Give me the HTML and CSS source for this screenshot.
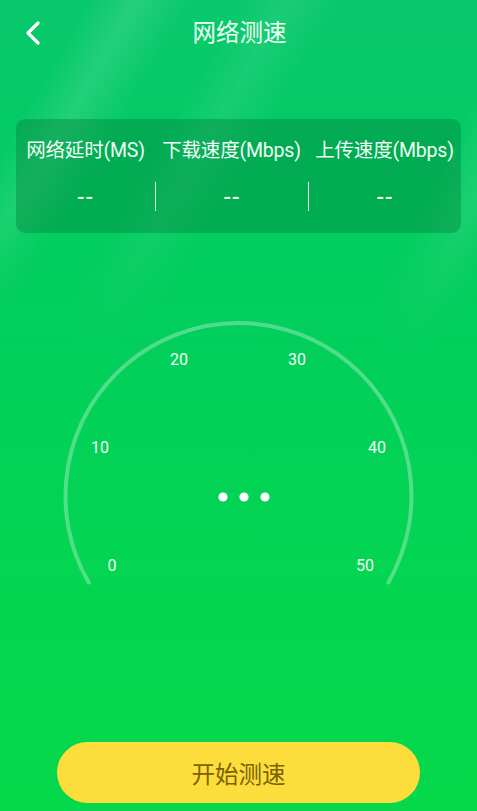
FILE: index.html
```html
<!DOCTYPE html>
<html lang="zh-CN">
<head>
<meta charset="utf-8">
<title>网络测速</title>
<link rel="stylesheet" href="styles.css">
</head>
<body>
<div class="page">
  <header class="topbar">
    <svg class="back" width="16" height="26" viewBox="0 0 16 26">
      <path d="M13 3 L3 13 L13 23" fill="none" stroke="#fff" stroke-width="3.2" stroke-linecap="round" stroke-linejoin="round"/>
    </svg>
    <h1 class="title">网络测速</h1>
  </header>

  <section class="card">
    <div class="labels">
      <span>网络延时(MS)</span>
      <span>下载速度(Mbps)</span>
      <span>上传速度(Mbps)</span>
    </div>
    <div class="values">
      <span class="val">--</span>
      <span class="val sep">--</span>
      <span class="val sep">--</span>
    </div>
  </section>

  <svg class="gauge" width="477" height="300" viewBox="0 0 477 300">
    <path d="M88.7 282.5 A173 173 0 1 1 388.3 282.5" fill="none" stroke="rgba(255,255,255,0.3)" stroke-width="4" stroke-linecap="round"/>
    <g class="ticks">
      <text x="112" y="265">0</text>
      <text x="100" y="147">10</text>
      <text x="179" y="59">20</text>
      <text x="297" y="59">30</text>
      <text x="377" y="147">40</text>
      <text x="365" y="265">50</text>
    </g>
    <circle cx="223" cy="197" r="4.6" fill="#fff"/>
    <circle cx="244" cy="197" r="4.6" fill="#fff"/>
    <circle cx="265" cy="197" r="4.6" fill="#fff"/>
  </svg>

  <div class="spacer"></div>

  <button class="start">开始测速</button>
</div>
</body>
</html>
```

FILE: styles.css
```css
html, body {
  margin: 0;
  padding: 0;
}
body {
  width: 477px;
  height: 811px;
  overflow: hidden;
  font-family: "Roboto", "Noto Sans CJK SC", sans-serif;
}
.page {
  width: 477px;
  height: 811px;
  display: flex;
  flex-direction: column;
  position: relative;
  isolation: isolate;
  background: linear-gradient(180deg, #08c86c 0%, #02cb63 22%, #02d05a 45%, #04d552 70%, #06d84b 100%);
}
.page::before {
  content: "";
  position: absolute;
  left: 0;
  top: 0;
  right: 0;
  height: 420px;
  z-index: -1;
  pointer-events: none;
  background:
    linear-gradient(120deg, rgba(255,255,255,0) 12%, rgba(255,255,255,0.12) 19%, rgba(255,255,255,0) 27%, rgba(255,255,255,0) 33%, rgba(255,255,255,0.08) 40%, rgba(255,255,255,0) 48%),
    linear-gradient(116deg, rgba(255,255,255,0) 76%, rgba(255,255,255,0.11) 84%, rgba(255,255,255,0) 92%);
  -webkit-mask-image: linear-gradient(180deg, #000 0%, #000 45%, transparent 85%);
  mask-image: linear-gradient(180deg, #000 0%, #000 45%, transparent 85%);
}
.topbar {
  height: 66px;
  position: relative;
  display: flex;
  align-items: center;
  justify-content: center;
}
.back {
  position: absolute;
  left: 25px;
  top: 20px;
}
.title {
  margin: 0 0 4px;
  font-family: "Noto Sans CJK SC", sans-serif;
  font-weight: 400;
  font-size: 23.5px;
  color: #effff4;
  line-height: 30px;
  padding-left: 2px;
}
.card {
  margin: 53px 16px 0;
  height: 114px;
  box-sizing: border-box;
  padding-top: 20px;
  background: rgba(0, 110, 50, 0.33);
  border-radius: 9px;
}
.labels, .values {
  display: grid;
  grid-template-columns: 139px 153px 1fr;
}
.labels span {
  text-align: center;
  white-space: nowrap;
  color: #f0fff5;
  font-size: 19.5px;
  line-height: 24px;
  letter-spacing: -0.2px;
}
.values {
  margin-top: 19px;
}
.val {
  height: 29px;
  display: flex;
  align-items: center;
  justify-content: center;
  color: #f2fff6;
  font-size: 22px;
  font-weight: 500;
  letter-spacing: 1px;
  padding-top: 2px;
  box-sizing: border-box;
}
.val.sep {
  border-left: 1.5px solid rgba(255,255,255,0.9);
}
.gauge {
  display: block;
  margin-top: 67px;
}
.ticks text {
  fill: #f2fff6;
  font-family: "Roboto", sans-serif;
  font-size: 16px;
  text-anchor: middle;
  dominant-baseline: central;
}
.spacer {
  flex: 1;
}
.start {
  margin: 0 57px 8px 57px;
  height: 61px;
  border: none;
  border-radius: 31px;
  background: #fddd3c;
  color: #7a6200;
  font-family: "Noto Sans CJK SC", sans-serif;
  font-size: 23.5px;
  padding: 0;
  cursor: pointer;
}
```
